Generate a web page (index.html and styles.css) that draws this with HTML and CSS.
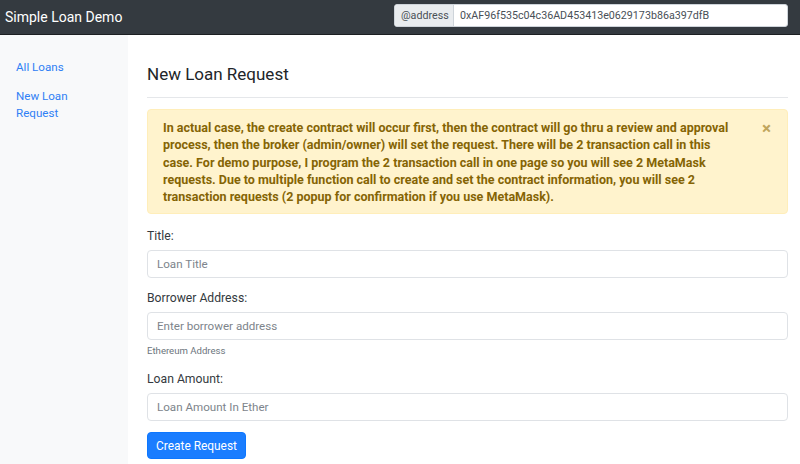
FILE: index.html
```html
<!DOCTYPE html>
<html lang="en">
<head>
<meta charset="utf-8">
<title>Simple Loan Demo</title>
<link rel="stylesheet" href="styles.css">
</head>
<body>
<nav class="navbar">
  <span class="brand">Simple Loan Demo</span>
  <div class="addr-group">
    <span class="addr-prepend">@address</span>
    <span class="addr-value">0xAF96f535c04c36AD453413e0629173b86a397dfB</span>
  </div>
</nav>
<div class="layout">
  <aside class="sidebar">
    <a class="side-link" href="#">All Loans</a>
    <a class="side-link" href="#">New Loan<br>Request</a>
  </aside>
  <main class="main">
    <h1 class="title">New Loan Request</h1>
    <hr class="divider">
    <div class="alert">
      <p class="alert-text">In actual case, the create contract will occur first, then the contract will go thru a review and approval<br>process, then the broker (admin/owner) will set the request. There will be 2 transaction call in this<br>case. For demo purpose, I program the 2 transaction call in one page so you will see 2 MetaMask<br>requests. Due to multiple function call to create and set the contract information, you will see 2<br>transaction requests (2 popup for confirmation if you use MetaMask).</p>
      <span class="close">&times;</span>
    </div>
    <form class="form">
      <div class="group">
        <label class="label">Title:</label>
        <input class="input" type="text" placeholder="Loan Title">
      </div>
      <div class="group">
        <label class="label">Borrower Address:</label>
        <input class="input" type="text" placeholder="Enter borrower address">
        <small class="help">Ethereum Address</small>
      </div>
      <div class="group last">
        <label class="label">Loan Amount:</label>
        <input class="input" type="text" placeholder="Loan Amount In Ether">
      </div>
      <button class="btn" type="button">Create Request</button>
    </form>
  </main>
</div>
</body>
</html>
```
FILE: styles.css
```css
* { box-sizing: border-box; }
html, body { margin: 0; padding: 0; }
body {
  font-family: Roboto, "Liberation Sans", sans-serif;
  font-size: 13px;
  color: #212529;
  background: #fff;
  width: 800px;
  height: 464px;
  overflow: hidden;
}
.navbar {
  height: 35px;
  background: #343a40;
  border-bottom: 1px solid #1c1f22;
  display: flex;
  align-items: center;
  justify-content: space-between;
  padding: 0 12px 0 5px;
}
.brand {
  color: #fff;
  font-size: 14px;
  margin-top: -1px;
}
.addr-group {
  flex: none;
  display: flex;
  width: 394px;
  height: 23px;
  border-radius: 3px;
  overflow: hidden;
  background: #fff;
  border: 1px solid #ced4da;
  margin-top: -3px;
  font-size: 10.7px;
  color: #495057;
}
.addr-prepend {
  flex: none;
  width: 59px;
  background: #e9ecef;
  border-right: 1px solid #ced4da;
  display: flex;
  align-items: center;
  padding-left: 6px;
}
.addr-value {
  flex: 1;
  min-width: 0;
  overflow: hidden;
  white-space: nowrap;
  display: flex;
  align-items: center;
  padding-left: 6px;
  color: #495057;
}
.layout {
  display: flex;
  height: 429px;
}
.sidebar {
  width: 128px;
  flex: none;
  background: #f8f9fa;
  padding: 24px 16px;
  display: flex;
  flex-direction: column;
  gap: 12px;
}
.side-link {
  color: #2f80f5;
  text-decoration: none;
  line-height: 17px;
  font-size: 11.6px;
}
.main {
  flex: 1;
  min-width: 0;
  padding: 0 12px 0 19px;
}
.title {
  font-size: 17px;
  font-weight: 400;
  line-height: 22px;
  margin: 28px 0 12px;
  color: #212529;
}
.divider {
  border: 0;
  border-top: 1px solid #e5e7ea;
  margin: 0 0 11px;
}
.alert {
  background: #fff3cd;
  border: 1px solid #ffeeba;
  border-radius: 4px;
  padding: 9px 15px 9px 15px;
  display: flex;
  justify-content: space-between;
  height: 105px;
}
.alert-text {
  margin: 0;
  color: #856404;
  font-weight: 700;
  font-size: 12.5px;
  line-height: 17.3px;
  white-space: nowrap;
}
.close {
  color: #c0a55c;
  font-size: 17px;
  font-weight: 700;
  line-height: 17px;
  margin: 1px 1px 0 0;
}
.form { margin-top: 14px; }
.group {
  display: flex;
  flex-direction: column;
  margin-bottom: 12px;
}
.group.last { margin-bottom: 11px; }
.label {
  line-height: 17px;
  margin-bottom: 5px;
  font-size: 12.2px;
  color: #343a40;
}
.input {
  height: 28px;
  border: 1px solid #dfe2e6;
  border-radius: 4px;
  padding: 0 9px;
  font-family: inherit;
  font-size: 11.6px;
  color: #495057;
}
.input::placeholder { color: #7d848b; }
.help {
  font-size: 9.6px;
  line-height: 13px;
  margin-top: 4px;
  color: #6c757d;
  margin-bottom: 2px;
}
.btn {
  height: 27px;
  width: 99px;
  background: #1a7dff;
  border: 1px solid #0d77ff;
  border-radius: 4px;
  color: #fff;
  font-family: inherit;
  font-size: 11.9px;
  padding: 0;
}
```
